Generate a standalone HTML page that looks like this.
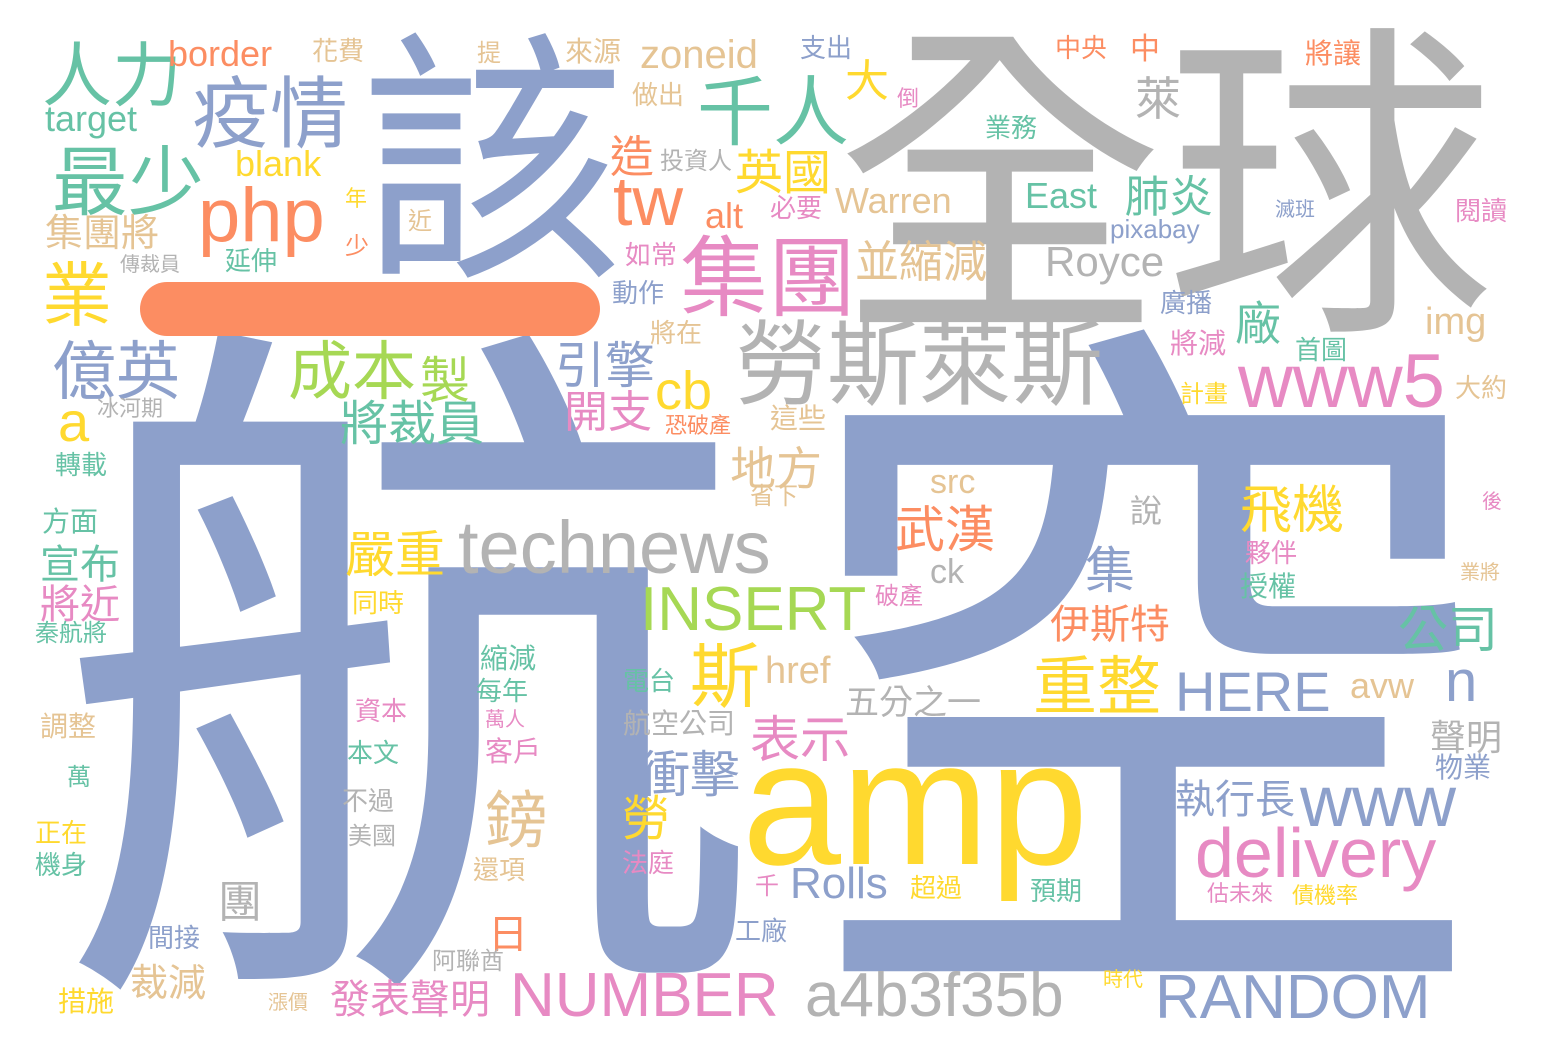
<!DOCTYPE html>
<html><head><meta charset="utf-8"><style>
html,body{margin:0;padding:0;background:#fff;width:1548px;height:1052px;overflow:hidden}
#c{position:relative;width:1548px;height:1052px}
.layer{position:absolute;left:0;top:0;width:1548px;height:1052px}
#bg{z-index:1}
#fg{z-index:5}
.layer span{position:absolute;line-height:1;white-space:nowrap;font-family:"Liberation Sans","Noto Sans CJK TC",sans-serif}
#fg span{margin-top:0.08em}
.p{color:#8da0cb}.o{color:#fc8d62}.g{color:#66c2a5}.k{color:#e78ac3}.l{color:#a6d854}.y{color:#ffd92f}.t{color:#e5c494}.r{color:#b3b3b3}
</style></head><body><div id="c">
<div class="layer" id="bg">
<span class="p" style="left:55px;top:330px;font-size:710px;letter-spacing:26px">航空</span>
<span class="r" style="left:835px;top:26px;font-size:330px">全球</span>
<span class="p" style="left:360px;top:33px;font-size:265px">該</span>
<div style="position:absolute;left:140px;top:282px;width:460px;height:54px;border-radius:27px;background:#fc8d62"></div>
</div>
<div class="layer" id="fg">
<span class="y" style="left:742px;top:700px;font-size:178px">amp</span>
<span class="r" style="left:735px;top:313px;font-size:92px">勞斯萊斯</span>
<span class="r" style="left:458px;top:505px;font-size:74px">technews</span>
<span class="k" style="left:680px;top:228px;font-size:88px">集團</span>
<span class="p" style="left:192px;top:69px;font-size:78px">疫情</span>
<span class="g" style="left:42px;top:35px;font-size:70px">人力</span>
<span class="g" style="left:697px;top:70px;font-size:76px">千人</span>
<span class="g" style="left:52px;top:140px;font-size:76px">最少</span>
<span class="o" style="left:198px;top:172px;font-size:76px">php</span>
<span class="o" style="left:613px;top:160px;font-size:70px">tw</span>
<span class="o" style="left:705px;top:195px;font-size:36px">alt</span>
<span class="y" style="left:42px;top:255px;font-size:70px">業</span>
<span class="p" style="left:52px;top:335px;font-size:64px">億英</span>
<span class="y" style="left:58px;top:390px;font-size:56px">a</span>
<span class="l" style="left:288px;top:335px;font-size:64px">成本</span>
<span class="l" style="left:420px;top:352px;font-size:50px">製</span>
<span class="g" style="left:340px;top:397px;font-size:48px">將裁員</span>
<span class="p" style="left:555px;top:337px;font-size:50px">引擎</span>
<span class="k" style="left:564px;top:387px;font-size:44px">開支</span>
<span class="y" style="left:655px;top:360px;font-size:54px">cb</span>
<span class="y" style="left:735px;top:146px;font-size:48px">英國</span>
<span class="o" style="left:610px;top:132px;font-size:44px">造</span>
<span class="y" style="left:845px;top:56px;font-size:44px">大</span>
<span class="r" style="left:1135px;top:72px;font-size:46px">萊</span>
<span class="t" style="left:640px;top:32px;font-size:40px">zoneid</span>
<span class="o" style="left:168px;top:33px;font-size:36px">border</span>
<span class="g" style="left:45px;top:98px;font-size:36px">target</span>
<span class="y" style="left:235px;top:143px;font-size:36px">blank</span>
<span class="t" style="left:835px;top:180px;font-size:36px">Warren</span>
<span class="g" style="left:1025px;top:175px;font-size:36px">East</span>
<span class="g" style="left:1125px;top:172px;font-size:44px">肺炎</span>
<span class="t" style="left:855px;top:237px;font-size:44px">並縮減</span>
<span class="r" style="left:1045px;top:238px;font-size:42px">Royce</span>
<span class="p" style="left:1110px;top:214px;font-size:26px">pixabay</span>
<span class="g" style="left:1235px;top:297px;font-size:46px">廠</span>
<span class="t" style="left:1425px;top:300px;font-size:38px">img</span>
<span class="k" style="left:1238px;top:338px;font-size:76px">www5</span>
<span class="t" style="left:730px;top:442px;font-size:46px">地方</span>
<span class="t" style="left:930px;top:462px;font-size:34px">src</span>
<span class="o" style="left:895px;top:501px;font-size:50px">武漢</span>
<span class="y" style="left:1240px;top:481px;font-size:52px">飛機</span>
<span class="y" style="left:345px;top:526px;font-size:50px">嚴重</span>
<span class="g" style="left:40px;top:542px;font-size:40px">宣布</span>
<span class="k" style="left:40px;top:582px;font-size:40px">將近</span>
<span class="l" style="left:640px;top:574px;font-size:62px">INSERT</span>
<span class="p" style="left:1085px;top:542px;font-size:50px">集</span>
<span class="r" style="left:930px;top:552px;font-size:34px">ck</span>
<span class="g" style="left:1398px;top:601px;font-size:50px">公司</span>
<span class="o" style="left:1050px;top:602px;font-size:40px">伊斯特</span>
<span class="y" style="left:690px;top:636px;font-size:70px">斯</span>
<span class="t" style="left:765px;top:649px;font-size:38px">href</span>
<span class="y" style="left:1033px;top:650px;font-size:64px">重整</span>
<span class="p" style="left:1175px;top:660px;font-size:56px">HERE</span>
<span class="p" style="left:1445px;top:648px;font-size:58px">n</span>
<span class="t" style="left:1350px;top:665px;font-size:36px">avw</span>
<span class="r" style="left:845px;top:683px;font-size:34px">五分之一</span>
<span class="k" style="left:750px;top:711px;font-size:50px">表示</span>
<span class="p" style="left:640px;top:746px;font-size:50px">衝擊</span>
<span class="r" style="left:1430px;top:717px;font-size:36px">聲明</span>
<span class="p" style="left:1435px;top:752px;font-size:28px">物業</span>
<span class="p" style="left:1175px;top:777px;font-size:40px">執行長</span>
<span class="p" style="left:1300px;top:760px;font-size:72px">www</span>
<span class="k" style="left:1195px;top:812px;font-size:70px">delivery</span>
<span class="t" style="left:485px;top:786px;font-size:62px">鎊</span>
<span class="y" style="left:622px;top:792px;font-size:48px">勞</span>
<span class="r" style="left:218px;top:877px;font-size:44px">團</span>
<span class="o" style="left:488px;top:912px;font-size:40px">日</span>
<span class="p" style="left:790px;top:858px;font-size:44px">Rolls</span>
<span class="k" style="left:755px;top:873px;font-size:24px">千</span>
<span class="y" style="left:910px;top:873px;font-size:26px">超過</span>
<span class="t" style="left:130px;top:962px;font-size:38px">裁減</span>
<span class="k" style="left:330px;top:977px;font-size:40px">發表聲明</span>
<span class="k" style="left:510px;top:960px;font-size:62px">NUMBER</span>
<span class="r" style="left:805px;top:960px;font-size:62px">a4b3f35b</span>
<span class="p" style="left:1155px;top:962px;font-size:62px">RANDOM</span>
<span class="t" style="left:312px;top:36px;font-size:26px">花費</span>
<span class="t" style="left:477px;top:40px;font-size:24px">提</span>
<span class="t" style="left:565px;top:36px;font-size:28px">來源</span>
<span class="p" style="left:800px;top:33px;font-size:26px">支出</span>
<span class="o" style="left:1055px;top:33px;font-size:26px">中央</span>
<span class="o" style="left:1130px;top:33px;font-size:30px">中</span>
<span class="o" style="left:1305px;top:38px;font-size:28px">將讓</span>
<span class="t" style="left:632px;top:80px;font-size:26px">做出</span>
<span class="k" style="left:897px;top:86px;font-size:22px">倒</span>
<span class="g" style="left:985px;top:113px;font-size:26px">業務</span>
<span class="r" style="left:660px;top:148px;font-size:24px">投資人</span>
<span class="k" style="left:770px;top:193px;font-size:26px">必要</span>
<span class="y" style="left:345px;top:186px;font-size:22px">年</span>
<span class="t" style="left:408px;top:208px;font-size:24px">近</span>
<span class="t" style="left:45px;top:212px;font-size:38px">集團將</span>
<span class="o" style="left:345px;top:233px;font-size:24px">少</span>
<span class="r" style="left:120px;top:253px;font-size:20px">傳裁員</span>
<span class="g" style="left:225px;top:246px;font-size:26px">延伸</span>
<span class="k" style="left:625px;top:240px;font-size:26px">如常</span>
<span class="p" style="left:612px;top:278px;font-size:26px">動作</span>
<span class="p" style="left:1275px;top:198px;font-size:20px">滅班</span>
<span class="k" style="left:1455px;top:196px;font-size:26px">閱讀</span>
<span class="p" style="left:1160px;top:288px;font-size:26px">廣播</span>
<span class="t" style="left:650px;top:318px;font-size:26px">將在</span>
<span class="k" style="left:1170px;top:328px;font-size:28px">將減</span>
<span class="g" style="left:1295px;top:335px;font-size:26px">首圖</span>
<span class="t" style="left:1455px;top:373px;font-size:26px">大約</span>
<span class="y" style="left:1180px;top:381px;font-size:24px">計畫</span>
<span class="r" style="left:97px;top:396px;font-size:22px">冰河期</span>
<span class="o" style="left:665px;top:413px;font-size:22px">恐破產</span>
<span class="t" style="left:770px;top:403px;font-size:28px">這些</span>
<span class="g" style="left:55px;top:450px;font-size:26px">轉載</span>
<span class="t" style="left:750px;top:483px;font-size:24px">省下</span>
<span class="r" style="left:1130px;top:492px;font-size:32px">說</span>
<span class="k" style="left:1482px;top:490px;font-size:20px">後</span>
<span class="g" style="left:42px;top:506px;font-size:28px">方面</span>
<span class="k" style="left:1245px;top:538px;font-size:26px">夥伴</span>
<span class="t" style="left:1460px;top:561px;font-size:20px">業將</span>
<span class="g" style="left:1240px;top:571px;font-size:28px">授權</span>
<span class="k" style="left:875px;top:583px;font-size:24px">破產</span>
<span class="y" style="left:352px;top:588px;font-size:26px">同時</span>
<span class="g" style="left:35px;top:620px;font-size:24px">秦航將</span>
<span class="g" style="left:480px;top:643px;font-size:28px">縮減</span>
<span class="g" style="left:623px;top:666px;font-size:26px">電台</span>
<span class="g" style="left:476px;top:676px;font-size:26px">每年</span>
<span class="k" style="left:355px;top:696px;font-size:26px">資本</span>
<span class="k" style="left:485px;top:708px;font-size:20px">萬人</span>
<span class="r" style="left:623px;top:708px;font-size:28px">航空公司</span>
<span class="t" style="left:40px;top:711px;font-size:28px">調整</span>
<span class="g" style="left:347px;top:738px;font-size:26px">本文</span>
<span class="k" style="left:485px;top:736px;font-size:28px">客戶</span>
<span class="g" style="left:67px;top:764px;font-size:24px">萬</span>
<span class="r" style="left:342px;top:786px;font-size:26px">不過</span>
<span class="y" style="left:35px;top:818px;font-size:26px">正在</span>
<span class="r" style="left:348px;top:823px;font-size:24px">美國</span>
<span class="g" style="left:35px;top:850px;font-size:26px">機身</span>
<span class="k" style="left:622px;top:848px;font-size:26px">法庭</span>
<span class="t" style="left:473px;top:855px;font-size:26px">還項</span>
<span class="g" style="left:1030px;top:876px;font-size:26px">預期</span>
<span class="k" style="left:1207px;top:881px;font-size:22px">估未來</span>
<span class="y" style="left:1292px;top:883px;font-size:22px">債機率</span>
<span class="p" style="left:148px;top:923px;font-size:26px">間接</span>
<span class="p" style="left:735px;top:916px;font-size:26px">工廠</span>
<span class="r" style="left:432px;top:948px;font-size:24px">阿聯酋</span>
<span class="y" style="left:58px;top:986px;font-size:28px">措施</span>
<span class="t" style="left:268px;top:991px;font-size:20px">漲價</span>
<span class="y" style="left:1103px;top:968px;font-size:20px">時代</span>
</div>
</div></body></html>
